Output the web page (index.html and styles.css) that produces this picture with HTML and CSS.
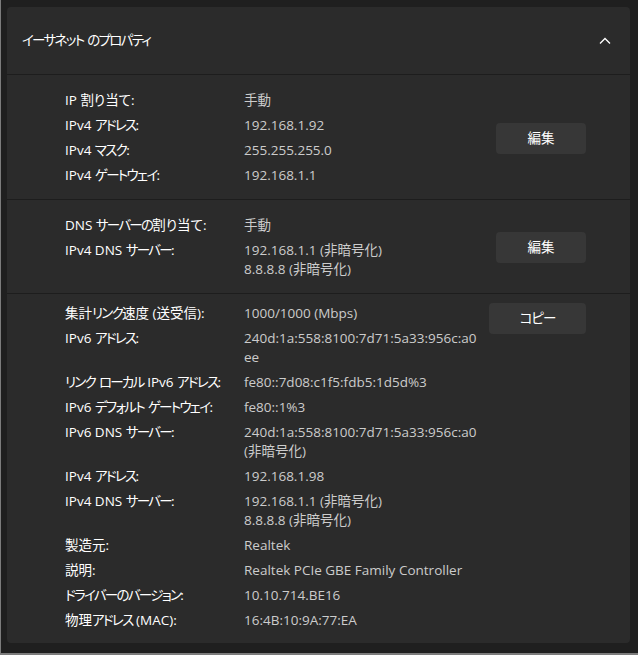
FILE: index.html
```html
<!DOCTYPE html>
<html lang="ja">
<head>
    <meta charset="UTF-8">
    <meta name="viewport" content="width=device-width, initial-scale=1.0">
    <title>イーサネット のプロパティ</title>
    <link rel="stylesheet" href="styles.css">
</head>
<body>
    <div class="card">
        <div class="card-header">
            <h2 class="card-title"><span class="ja">イーサネット のプロパティ</span></h2>
            <svg class="chevron" width="12" height="8" viewBox="0 0 12 8">
                <polyline points="1,6.5 6,1.5 11,6.5" fill="none" stroke="#fff" stroke-width="1.3"/>
            </svg>
        </div>

        <!-- IP -->
        <div class="section center">
            <dl class="props">
                <dt>IP 割り当て:</dt><dd>手動</dd>
                <dt>IPv4 <span class="ja">アドレス</span>:</dt><dd>192.168.1.92</dd>
                <dt>IPv4 <span class="ja">マスク</span>:</dt><dd>255.255.255.0</dd>
                <dt>IPv4 <span class="ja">ゲートウェイ</span>:</dt><dd>192.168.1.1</dd>
            </dl>
            <a href="#" class="btn">編集</a>
        </div>

        <!-- DNS -->
        <div class="section center">
            <dl class="props">
                <dt>DNS <span class="ja">サーバーの</span>割り当て:</dt><dd>手動</dd>
                <dt>IPv4 DNS <span class="ja">サーバー</span>:</dt><dd>192.168.1.1 (非暗号化)<br>8.8.8.8 (非暗号化)</dd>
            </dl>
            <a href="#" class="btn">編集</a>
        </div>

        <!-- 詳細 -->
        <div class="section top">
            <dl class="props">
                <dt>集計<span class="ja">リンク</span>速度 (送受信):</dt><dd>1000/1000 (Mbps)</dd>
                <dt>IPv6 <span class="ja">アドレス</span>:</dt><dd>240d:1a:558:8100:7d71:5a33:956c:a0<br>ee</dd>
                <dt><span class="ja">リンク ローカル</span> IPv6 <span class="ja">アドレス</span>:</dt><dd>fe80::7d08:c1f5:fdb5:1d5d%3</dd>
                <dt>IPv6 <span class="ja">デフォルト ゲートウェイ</span>:</dt><dd>fe80::1%3</dd>
                <dt>IPv6 DNS <span class="ja">サーバー</span>:</dt><dd>240d:1a:558:8100:7d71:5a33:956c:a0<br>(非暗号化)</dd>
                <dt>IPv4 <span class="ja">アドレス</span>:</dt><dd>192.168.1.98</dd>
                <dt>IPv4 DNS <span class="ja">サーバー</span>:</dt><dd>192.168.1.1 (非暗号化)<br>8.8.8.8 (非暗号化)</dd>
                <dt>製造元:</dt><dd>Realtek</dd>
                <dt>説明:</dt><dd>Realtek PCIe GBE Family Controller</dd>
                <dt><span class="ja">ドライバーのバージョン</span>:</dt><dd>10.10.714.BE16</dd>
                <dt>物理<span class="ja">アドレス</span> (MAC):</dt><dd>16:4B:10:9A:77:EA</dd>
            </dl>
            <a href="#" class="btn wide"><span class="ja">コピー</span></a>
        </div>
    </div>
</body>
</html>
```

FILE: styles.css
```css
html{
    height:100%;
}
body{
    margin:0;
    height:100%;
    box-sizing:border-box;
    padding:7px 8px 0 6px;
    background:#1f1f1f;
    border-left:1px solid #7c7c7c;
    border-bottom:2px solid #7c7c7c;
    font-family:"Open Sans","Noto Sans CJK JP",sans-serif;
    font-size:13.5px;
    color:#fff;
    font-feature-settings:"palt";
}
/* カナは詰める */
.ja{
    letter-spacing:-1.7px;
    word-spacing:2px;
}
.card{
    background:#2b2b2b;
    border-radius:4px;
}
.card-header{
    display:flex;
    align-items:center;
    justify-content:space-between;
    box-sizing:border-box;
    height:67px;
    padding:0 19px 0 15px;
}
.card-title{
    margin:0;
    font-size:13.5px;
    font-weight:normal;
    line-height:19px;
}
.chevron{
    display:block;
}
.section{
    display:flex;
    border-top:1px solid #1d1d1d;
    padding:16px 44px 14px 58px;
}
.section.center{
    align-items:center;
}
.section.top{
    align-items:flex-start;
    padding-top:10px;
    padding-bottom:13px;
}
.props{
    flex:1;
    display:grid;
    grid-template-columns:179px 1fr;
    row-gap:6px;
    margin:0;
    line-height:19px;
}
.props dt{
    color:#fff;
    white-space:nowrap;
}
.props dd{
    margin:0;
    color:#cccccc;
    white-space:nowrap;
}
.btn{
    display:block;
    width:90px;
    height:31px;
    line-height:31px;
    text-align:center;
    background:#373737;
    border-radius:4px;
    color:#fff;
    text-decoration:none;
}
.btn .ja{
    letter-spacing:-1px;
}
.btn.wide{
    width:97px;
    margin-top:-1px;
}
```
